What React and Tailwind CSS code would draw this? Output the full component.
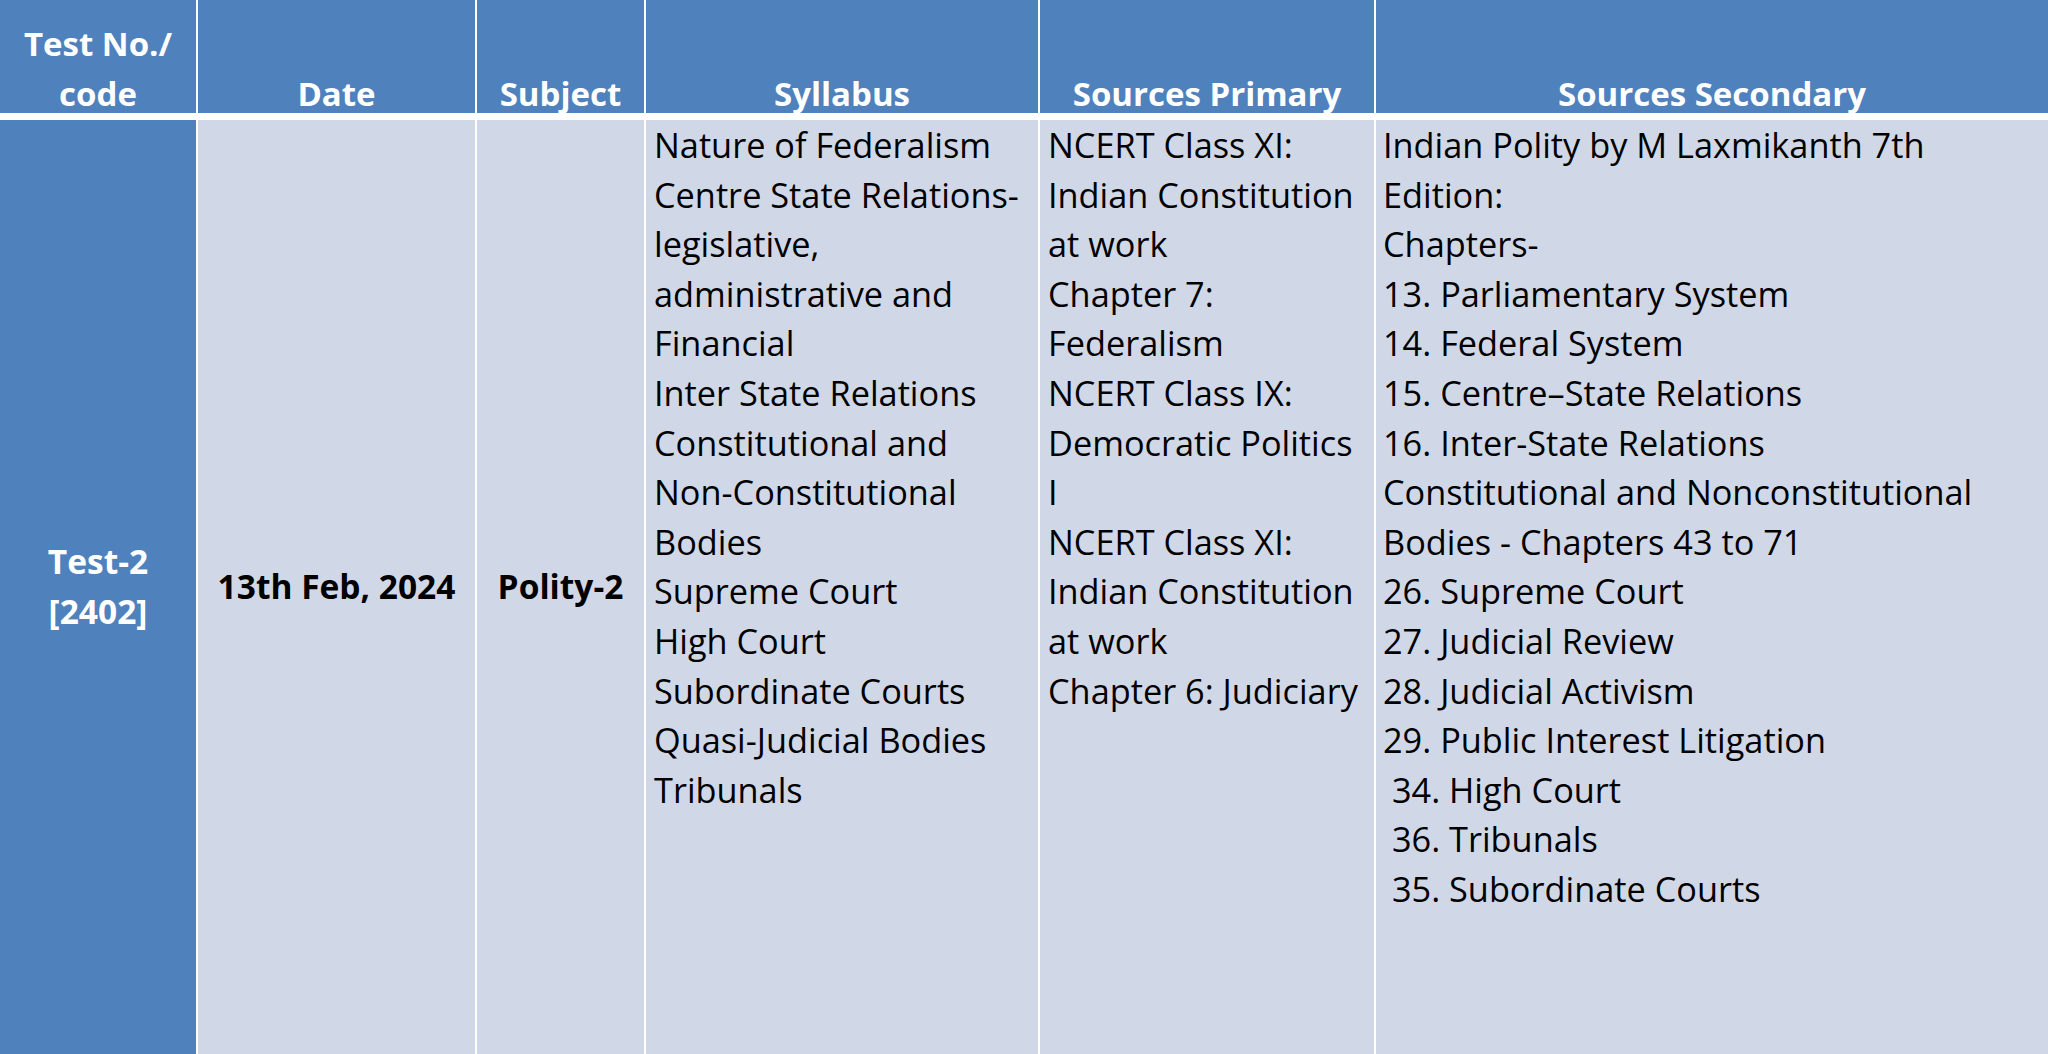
import React from 'react';

const syllabus = [
  'Nature of Federalism',
  'Centre State Relations-',
  'legislative,',
  'administrative and',
  'Financial',
  'Inter State Relations',
  'Constitutional and',
  'Non-Constitutional',
  'Bodies',
  'Supreme Court',
  'High Court',
  'Subordinate Courts',
  'Quasi-Judicial Bodies',
  'Tribunals',
];

const primary = [
  'NCERT Class XI:',
  'Indian Constitution',
  'at work',
  'Chapter 7:',
  'Federalism',
  'NCERT Class IX:',
  'Democratic Politics',
  'I',
  'NCERT Class XI:',
  'Indian Constitution',
  'at work',
  'Chapter 6: Judiciary',
];

const secondary = [
  'Indian Polity by M Laxmikanth 7th',
  'Edition:',
  'Chapters-',
  '13. Parliamentary System',
  '14. Federal System',
  '15. Centre\u2013State Relations',
  '16. Inter-State Relations',
  'Constitutional and Nonconstitutional',
  'Bodies - Chapters 43 to 71',
  '26. Supreme Court',
  '27. Judicial Review',
  '28. Judicial Activism',
  '29. Public Interest Litigation',
  ' 34. High Court',
  ' 36. Tribunals',
  ' 35. Subordinate Courts',
];

const HeaderCell = ({ lines }) => (
  <div className="flex items-end justify-center bg-[#4f81bd]">
    <div className="-mb-[6px] text-center font-bold text-white text-[33px] leading-[50px]">
      {lines.map((l, i) => (
        <div key={i} className="whitespace-nowrap">{l}</div>
      ))}
    </div>
  </div>
);

const Lines = ({ items, className }) => (
  <div className={className}>
    {items.map((l, i) => (
      <div key={i} className="whitespace-pre">{l}</div>
    ))}
  </div>
);

export default function App() {
  return (
    <div
      className="h-[1054px] w-[2048px] overflow-hidden bg-white"
      style={{ fontFamily: '"Open Sans", Lato, sans-serif' }}
    >
      <div className="grid h-full grid-cols-[196px_277px_167px_392px_334px_1fr] grid-rows-[113px_1fr] gap-x-[2px] gap-y-[7px]">
        {/* Header */}
        <HeaderCell lines={['Test No./', 'code']} />
        <HeaderCell lines={['Date']} />
        <HeaderCell lines={['Subject']} />
        <HeaderCell lines={['Syllabus']} />
        <HeaderCell lines={['Sources Primary']} />
        <HeaderCell lines={['Sources Secondary']} />

        {/* Body */}
        <div className="flex items-center justify-center bg-[#4f81bd] text-center font-bold text-white text-[33.5px] leading-[49.6px]">
          <div>
            <div>Test-2</div>
            <div>[2402]</div>
          </div>
        </div>
        <div className="flex items-center justify-center bg-[#d0d8e8] font-bold text-black text-[33.5px] leading-[49.6px]">
          <div className="whitespace-nowrap">13th Feb, 2024</div>
        </div>
        <div className="flex items-center justify-center bg-[#d0d8e8] font-bold text-black text-[33.5px] leading-[49.6px]">
          <div className="whitespace-nowrap">Polity-2</div>
        </div>
        <div className="bg-[#d0d8e8] pl-[8px] text-black text-[34.3px] leading-[49.6px]">
          <Lines items={syllabus} />
        </div>
        <div className="bg-[#d0d8e8] pl-[8px] text-black text-[34.3px] leading-[49.6px]">
          <Lines items={primary} />
        </div>
        <div className="bg-[#d0d8e8] pl-[7px] text-black text-[34.3px] leading-[49.6px]">
          <Lines items={secondary} />
        </div>
      </div>
    </div>
  );
}
